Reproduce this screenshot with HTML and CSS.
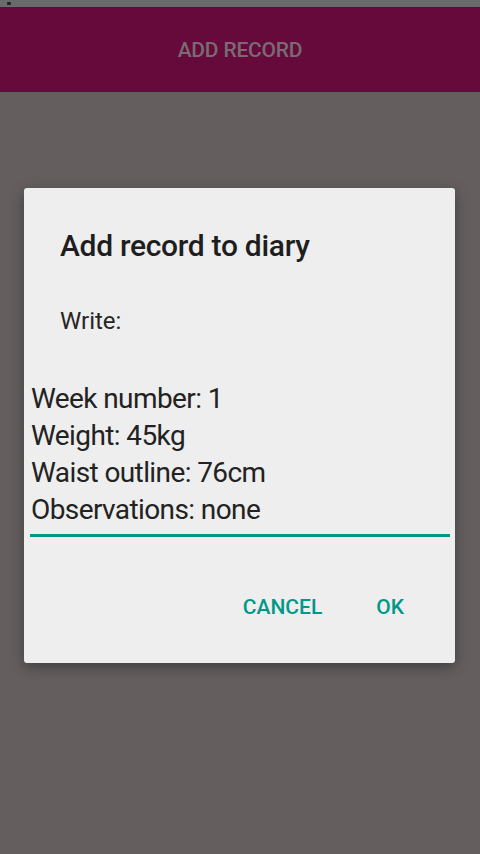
FILE: index.html
```html
<!DOCTYPE html>
<html lang="en">
<head>
    <meta charset="UTF-8">
    <meta name="viewport" content="width=device-width, initial-scale=1.0">
    <title>Add record</title>
    <link rel="stylesheet" href="styles.css">
</head>
<body>

<div class="status-bar"><span class="status-dot"></span></div>

<header class="toolbar">
    <span class="toolbar-title">ADD RECORD</span>
</header>

<div class="dialog">
    <h2 class="dialog-title">Add record to diary</h2>
    <p class="dialog-label">Write:</p>
    <div class="dialog-field">
        <div class="field-line">Week number: 1</div>
        <div class="field-line">Weight: 45kg</div>
        <div class="field-line">Waist outline: 76cm</div>
        <div class="field-line">Observations: none</div>
    </div>
    <div class="dialog-actions">
        <button class="dialog-btn">CANCEL</button>
        <button class="dialog-btn">OK</button>
    </div>
</div>

</body>
</html>
```

FILE: styles.css
```css
body {
    font-family: Roboto, "Noto Sans", sans-serif;
    background-color: #645e5f;
    margin: 0;
    height: 854px;
    overflow: hidden;
}
.status-bar {
    height: 7px;
    background-color: #6a6a6a;
    display: flex;
    align-items: center;
    padding-left: 7px;
}
.status-dot {
    width: 4px;
    height: 3px;
    background-color: #222;
    border-radius: 1px;
}
.toolbar {
    height: 85px;
    background-color: #650a3b;
    display: flex;
    justify-content: center;
    align-items: center;
}
.toolbar-title {
    color: #7b6a73;
    font-size: 21px;
    font-weight: 500;
    letter-spacing: -0.2px;
}
.dialog {
    margin: 96px 25px 0 24px;
    height: 475px;
    box-sizing: border-box;
    padding-top: 40px;
    background-color: #eeeeee;
    border-radius: 3px;
    box-shadow: 0 4px 14px rgba(0, 0, 0, 0.35);
}
.dialog-title {
    margin: 0;
    padding: 0 36px;
    font-size: 30px;
    line-height: 36px;
    font-weight: 500;
    letter-spacing: -0.3px;
    color: #1e1e1e;
}
.dialog-label {
    margin: 42px 0 0;
    padding: 0 36px;
    font-size: 24px;
    line-height: 30px;
    color: #262626;
}
.dialog-field {
    margin: 44px 5px 0 6px;
    padding-left: 1px;
    border-bottom: 3px solid #00988a;
    padding-bottom: 6px;
}
.field-line {
    font-size: 28px;
    line-height: 37px;
    letter-spacing: -0.6px;
    color: #222222;
}
.dialog-actions {
    display: flex;
    justify-content: flex-end;
    gap: 54px;
    padding: 56px 51px 0 0;
}
.dialog-btn {
    font-family: Roboto, sans-serif;
    font-size: 21px;
    font-weight: 500;
    color: #00988a;
    background: none;
    border: none;
    padding: 0;
    line-height: 28px;
}
```
